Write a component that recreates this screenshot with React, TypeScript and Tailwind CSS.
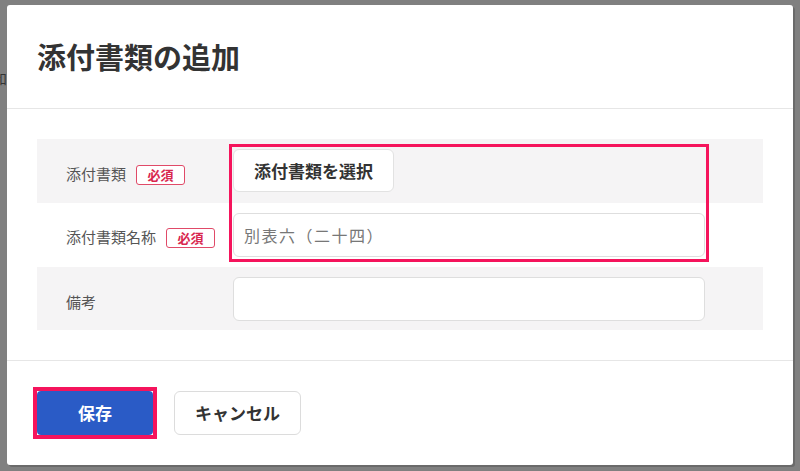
import React from "react";

const font = { fontFamily: '"Noto Sans CJK JP", "Noto Sans", sans-serif' };

function Required() {
  return (
    <span className="ml-[10px] inline-flex h-[20px] w-[49px] items-center justify-center rounded-[3px] border border-[#e04a68] bg-white text-[13px] font-bold leading-none text-[#d8284f]">
      必須
    </span>
  );
}

export default function App() {
  return (
    <div className="relative h-[471px] w-[800px] overflow-hidden bg-[#808080] pl-[7px] pt-[5px]" style={font}>
      {/* page behind the dialog */}
      <span className="absolute left-[-7px] top-[68px] text-[14px] text-[#333]">和</span>

      <div className="relative flex h-[460px] w-[786px] flex-col rounded-[3px] bg-white shadow-[2px_2px_0_#6a6a6a]">
        {/* Header */}
        <div className="flex h-[104px] items-center border-b border-[#e6e6e6] pl-[30px]">
          <h1 className="text-[29px] font-bold leading-none text-[#333]">添付書類の追加</h1>
        </div>

        {/* Body */}
        <div className="border-b border-[#e6e6e6] px-[30px] pb-[30px] pt-[30px]">
          <div className="flex h-[64px] items-center bg-[#f5f4f5]">
            <div className="flex w-[196px] items-center pl-[29px] pt-[7px] text-[15px] text-[#555]">
              添付書類
              <Required />
            </div>
            <button className="mb-[1px] h-[43px] w-[161px] rounded-[6px] border border-[#e2e2e2] bg-white text-[17px] font-bold text-[#333]">
              添付書類を選択
            </button>
          </div>
          <div className="flex h-[64px] items-start bg-white pt-[10px]">
            <div className="flex h-[44px] w-[196px] items-center pl-[29px] pt-[5px] text-[15px] text-[#555]">
              添付書類名称
              <Required />
            </div>
            <div className="flex h-[44px] w-[472px] items-center rounded-[6px] border border-[#dedede] bg-white pl-[10px] text-[16px] tracking-[1.5px] text-[#777]">
              別表六（二十四）
            </div>
          </div>
          <div className="flex h-[63px] items-start bg-[#f5f4f5] pt-[10px]">
            <div className="flex h-[44px] w-[196px] items-center pl-[29px] pt-[6px] text-[15px] text-[#555]">
              備考
            </div>
            <div className="h-[44px] w-[472px] rounded-[6px] border border-[#dedede] bg-white" />
          </div>
        </div>

        {/* Footer */}
        <div className="flex gap-[21px] pl-[30px] pt-[30px]">
          <button className="h-[44px] w-[116px] rounded-[4px] bg-[#2a5bc6] text-[17px] font-bold text-white">
            保存
          </button>
          <button className="h-[44px] w-[127px] rounded-[6px] border border-[#dcdcdc] bg-white text-[17px] font-bold text-[#333]">
            キャンセル
          </button>
        </div>

        {/* annotation boxes */}
        <div className="pointer-events-none absolute left-[222px] top-[139px] h-[118px] w-[480px] border-[3px] border-[#f5145c]" />
        <div className="pointer-events-none absolute left-[26px] top-[382px] h-[52px] w-[124px] border-[4px] border-[#f5145c]" />
      </div>
    </div>
  );
}
